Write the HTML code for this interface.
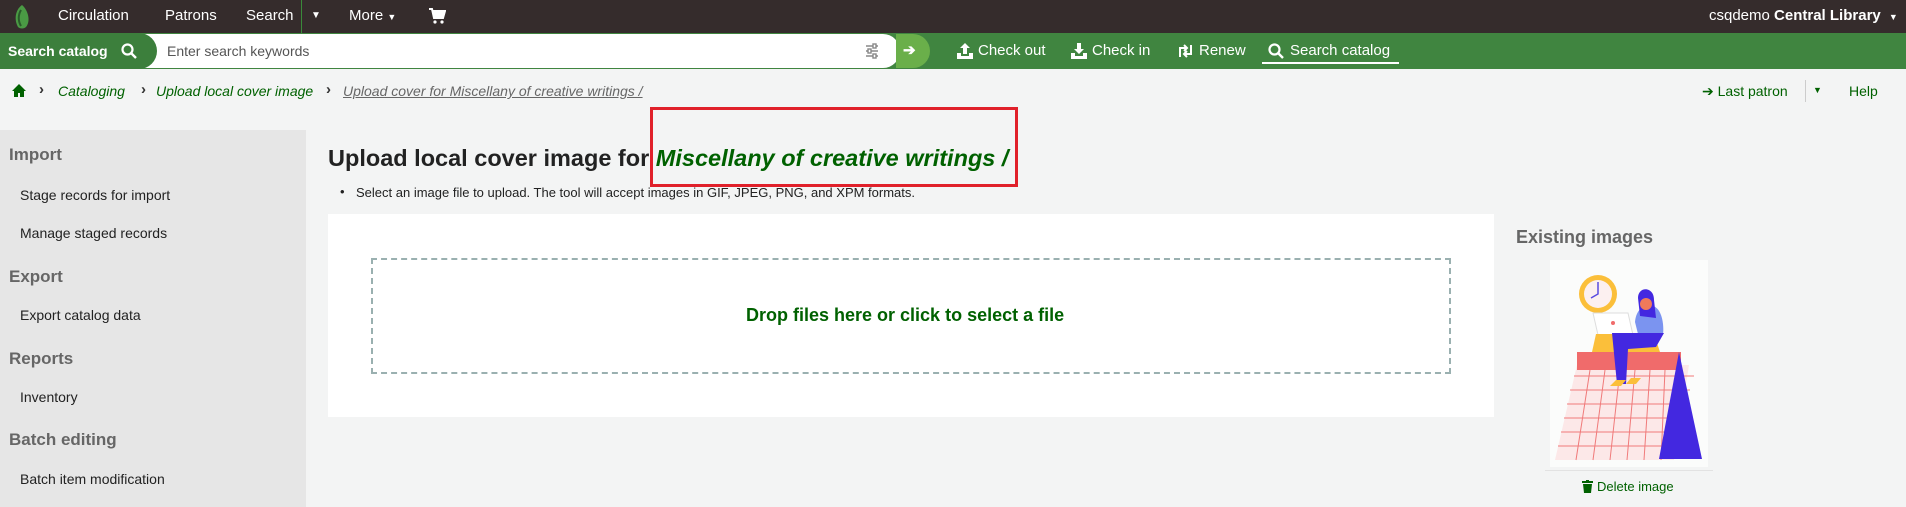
<!DOCTYPE html>
<html><head><meta charset="utf-8"><style>
*{box-sizing:border-box;margin:0;padding:0}
body{width:1906px;height:507px;overflow:hidden;background:#f3f4f4;font-family:"Liberation Sans",sans-serif;position:relative;color:#222}
.a{position:absolute;white-space:nowrap}
#top{position:absolute;left:0;top:0;width:1906px;height:33px;background:#352c2c}
#top .a{color:#fff;font-size:15px;top:7px}
#gb{position:absolute;left:0;top:33px;width:1906px;height:36px;background:#408540}
#gb .a{color:#fff;font-size:15px;top:9px}
.side{position:absolute;left:0;top:130px;width:306px;height:377px;background:#e6e6e6}
.sh{position:absolute;left:9px;font-size:17px;font-weight:bold;color:#666}
.si{position:absolute;left:20px;font-size:14px;color:#222}
.cv{position:absolute;top:81px;font-size:15px;font-weight:bold;color:#333}
</style></head><body>
<div id="top">
 <svg class="a" style="left:12px;top:4px" width="20" height="26" viewBox="0 0 20 26"><path d="M10 1C3 6 2 16 6 23c2 2 6 2 8 0C19 17 16 6 10 1z" fill="#4a9a44"/><path d="M9 6c-3 5-3 11 0 16" stroke="#2a5a2a" stroke-width="2" fill="none"/></svg>
 <span class="a" style="left:58px">Circulation</span>
 <span class="a" style="left:165px">Patrons</span>
 <span class="a" style="left:246px">Search</span>
 <div class="a" style="left:301px;top:0;width:1px;height:33px;background:#3a8a3a"></div>
 <span class="a" style="left:311px;font-size:10px;top:10px">▼</span>
 <span class="a" style="left:349px">More <span style="font-size:9px">▼</span></span>
 <svg class="a" style="left:428px;top:7px" width="18" height="18" viewBox="0 0 18 18"><path d="M1 2h3l2 9h9l2-7H5" stroke="#fff" stroke-width="2" fill="#fff"/><circle cx="7" cy="15" r="1.6" fill="#fff"/><circle cx="14" cy="15" r="1.6" fill="#fff"/></svg>
 <span class="a" style="left:1709px">csqdemo <b>Central Library</b> <span style="font-size:9px;margin-left:4px">▼</span></span>
</div>
<div id="gb">
 <div class="a" style="left:140px;top:1px;width:760px;height:34px;background:#fff;border-radius:0 17px 17px 0"></div>
 <div class="a" style="left:0;top:0;width:157px;height:36px;background:#3c7f3c;border-radius:0 18px 18px 0"></div>
 <span class="a" style="left:8px;font-weight:bold;font-size:14px;top:10px">Search catalog</span>
 <svg class="a" style="left:121px;top:10px" width="16" height="16" viewBox="0 0 16 16"><circle cx="6.5" cy="6.5" r="5" stroke="#fff" stroke-width="2.2" fill="none"/><path d="M10 10l5 5" stroke="#fff" stroke-width="2.4"/></svg>
 <span class="a" style="left:167px;color:#555!important;font-size:14px;top:10px">Enter search keywords</span>
 <svg class="a" style="left:864px;top:10px" width="16" height="16" viewBox="0 0 16 16" stroke="#888" stroke-width="1.4"><path d="M2 3h12M2 8h12M2 13h12"/><rect x="9" y="1" width="3" height="4" fill="#fff"/><rect x="4" y="6" width="3" height="4" fill="#fff"/><rect x="9" y="11" width="3" height="4" fill="#fff"/></svg>
 <div class="a" style="left:896px;top:1px;width:34px;height:34px;background:#6aaf4a;border-radius:0 17px 17px 0"></div>
 <span class="a" style="left:903px;top:8px;font-weight:bold">➔</span>
 <svg class="a" style="left:956px;top:9px" width="18" height="18" viewBox="0 0 18 18" fill="#fff"><path d="M9 1l-5 5h3v6h4V6h3z"/><path d="M1 11h4v3h8v-3h4v6H1z"/></svg>
 <span class="a" style="left:978px">Check out</span>
 <svg class="a" style="left:1070px;top:9px" width="18" height="18" viewBox="0 0 18 18" fill="#fff"><path d="M9 12l-5-5h3V1h4v6h3z"/><path d="M1 11h4v3h8v-3h4v6H1z"/></svg>
 <span class="a" style="left:1092px">Check in</span>
 <svg class="a" style="left:1177px;top:11px" width="17" height="14" viewBox="0 0 17 14" stroke="#fff" stroke-width="2" fill="none"><path d="M3 13V4h7M7 1l3 3-3 3M14 1v9H7M10 13l-3-3 3-3"/></svg>
 <span class="a" style="left:1199px">Renew</span>
 <svg class="a" style="left:1268px;top:10px" width="16" height="16" viewBox="0 0 16 16"><circle cx="6.5" cy="6.5" r="5" stroke="#fff" stroke-width="2.2" fill="none"/><path d="M10 10l5 5" stroke="#fff" stroke-width="2.4"/></svg>
 <span class="a" style="left:1290px">Search catalog</span>
 <div class="a" style="left:1262px;top:29px;width:137px;height:2px;background:#fff"></div>
</div>
<svg class="a" style="left:12px;top:84px" width="14" height="13" viewBox="0 0 14 13"><path d="M7 0L0 7h2v6h4V9h2v4h4V7h2z" fill="#006100"/></svg>
<span class="cv" style="left:39px">›</span>
<span class="a" style="left:58px;top:83px;font-size:14px;color:#006100;font-style:italic">Cataloging</span>
<span class="cv" style="left:141px">›</span>
<span class="a" style="left:156px;top:83px;font-size:14px;color:#006100;font-style:italic">Upload local cover image</span>
<span class="cv" style="left:326px">›</span>
<span class="a" style="left:343px;top:83px;font-size:14px;color:#666;font-style:italic;text-decoration:underline">Upload cover for Miscellany of creative writings /</span>
<span class="a" style="left:1702px;top:83px;font-size:14px;color:#006100">➔ Last patron</span>
<div class="a" style="left:1805px;top:80px;width:1px;height:22px;background:#ccc"></div>
<span class="a" style="left:1813px;top:85px;font-size:9px;color:#006100">▼</span>
<span class="a" style="left:1849px;top:83px;font-size:14px;color:#006100">Help</span>
<div class="side">
 <span class="sh" style="top:15px">Import</span>
 <span class="si" style="top:57px">Stage records for import</span>
 <span class="si" style="top:95px">Manage staged records</span>
 <span class="sh" style="top:137px">Export</span>
 <span class="si" style="top:177px">Export catalog data</span>
 <span class="sh" style="top:219px">Reports</span>
 <span class="si" style="top:259px">Inventory</span>
 <span class="sh" style="top:300px">Batch editing</span>
 <span class="si" style="top:341px">Batch item modification</span>
</div>
<span class="a" style="left:328px;top:145px;font-size:23.5px;font-weight:bold">Upload local cover image for <i style="color:#006100">Miscellany of creative writings /</i></span>
<div class="a" style="left:650px;top:107px;width:368px;height:80px;border:3px solid #e0202a"></div>
<span class="a" style="left:340px;top:184px;font-size:13px">•</span>
<span class="a" style="left:356px;top:185px;font-size:13px">Select an image file to upload. The tool will accept images in GIF, JPEG, PNG, and XPM formats.</span>
<div class="a" style="left:328px;top:214px;width:1166px;height:203px;background:#fff"></div>
<div class="a" style="left:371px;top:258px;width:1080px;height:116px;border:2px dashed #9ab0b0"></div>
<span class="a" style="left:746px;top:305px;font-size:18px;font-weight:bold;color:#006100">Drop files here or click to select a file</span>
<span class="a" style="left:1516px;top:227px;font-size:18px;font-weight:bold;color:#666">Existing images</span>
<svg class="a" style="left:1550px;top:260px" width="158" height="207" viewBox="0 0 158 207">
 <rect width="158" height="207" fill="#fbfcfb"/>
 <circle cx="48" cy="34" r="19" fill="#fbbf3a"/><circle cx="48" cy="34" r="14" fill="#fcf0f0"/>
 <path d="M48 22v12l-7 4" stroke="#5a4ae0" stroke-width="1.5" fill="none"/>
 <path d="M5 200l22-95h112l-15 95z" fill="#fce8e8"/>
 <g stroke="#f07a7a" stroke-width="1"><path d="M8 186h120M11 172h120M14 158h120M17 144h120M20 130h120M24 116h120"/><path d="M40 110l-14 90M55 110l-12 90M70 110l-10 90M85 110l-8 90M100 110l-6 90M115 110l-4 90"/></g>
 <rect x="27" y="92" width="104" height="18" fill="#f06b6b"/>
 <path d="M129 92l23 107h-43z" fill="#4328e0"/>
 <path d="M43 53h35l5 22H48z" fill="#fff" stroke="#ddd"/><circle cx="63" cy="63" r="2" fill="#f06b6b"/>
 <path d="M42 92l4-18h58l6 18z" fill="#fbbf3a"/>
 <path d="M85 62c1-12 8-18 18-16 10 3 11 22 10 28l-25 0z" fill="#7b94f0"/>
 <path d="M88 38c0-12 16-12 16 2l2 18-16-2z" fill="#4328e0"/><circle cx="96" cy="44" r="6" fill="#f07a5a"/>
 <path d="M62 73h52l-8 14-28 2-2 35h-9z" fill="#4328e0"/>
 <path d="M60 126h11l5-6h-10zM76 124h10l5-6h-10z" fill="#fbbf3a"/>
</svg>
<div class="a" style="left:1545px;top:470px;width:168px;height:1px;background:#e2e2e2"></div>
<svg class="a" style="left:1582px;top:480px" width="11" height="13" viewBox="0 0 11 13" fill="#006100"><rect x="0" y="1" width="11" height="2"/><rect x="4" y="0" width="3" height="2"/><path d="M1 4h9l-1 9H2z"/></svg>
<span class="a" style="left:1597px;top:479px;font-size:13px;color:#006100">Delete image</span>
</body></html>
